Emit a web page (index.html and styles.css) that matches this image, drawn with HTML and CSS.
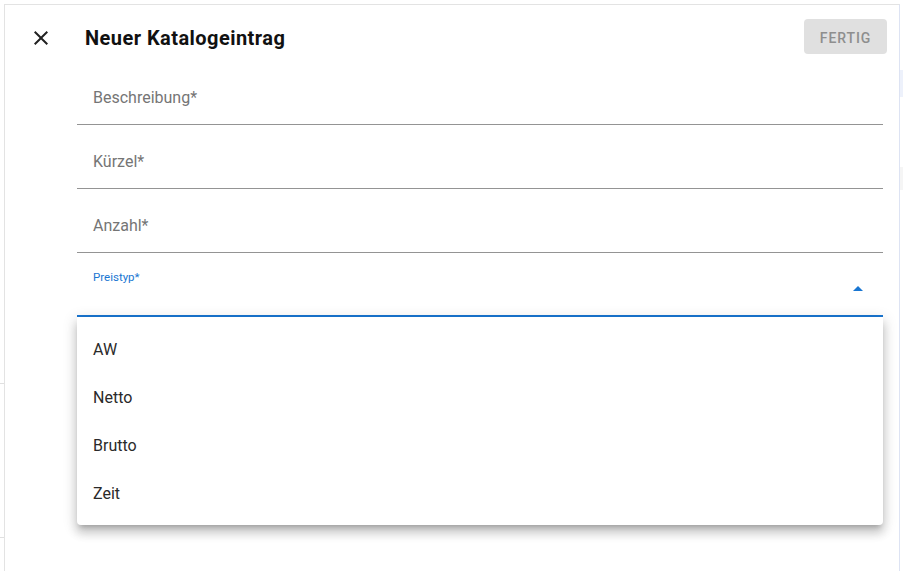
FILE: index.html
```html
<!DOCTYPE html>
<html lang="de">
<head>
<meta charset="utf-8">
<title>Neuer Katalogeintrag</title>
<link rel="stylesheet" href="styles.css">
</head>
<body>
<div class="page">
  <div class="strip-left">
    <div class="mark mark-1"></div>
    <div class="mark mark-2"></div>
  </div>
  <div class="dialog">
    <div class="header">
      <svg class="close-icon" width="24" height="24" viewBox="0 0 24 24" aria-hidden="true"><path d="M19 6.41 17.59 5 12 10.59 6.41 5 5 6.41 10.59 12 5 17.59 6.41 19 12 13.41 17.59 19 19 17.59 13.41 12z" fill="#212121"/></svg>
      <h1 class="title">Neuer Katalogeintrag</h1>
      <button class="done" disabled>FERTIG</button>
    </div>
    <div class="form">
      <div class="field"><span class="label">Beschreibung*</span></div>
      <div class="field"><span class="label">Kürzel*</span></div>
      <div class="field"><span class="label">Anzahl*</span></div>
      <div class="field field-select">
        <span class="label-small">Preistyp*</span>
        <svg class="arrow" width="24" height="24" viewBox="0 0 24 24" aria-hidden="true"><path d="M7 14l5-5 5 5z" fill="#1976d2"/></svg>
      </div>
      <ul class="menu">
        <li class="item">AW</li>
        <li class="item">Netto</li>
        <li class="item">Brutto</li>
        <li class="item">Zeit</li>
      </ul>
    </div>
  </div>
  <div class="strip-right">
    <div class="block block-blue"></div>
    <div class="block block-grey"></div>
  </div>
</div>
</body>
</html>
```
FILE: styles.css
```css
* { box-sizing: border-box; }
html, body { margin: 0; padding: 0; background: #fff; }
body { font-family: Roboto, "Liberation Sans", sans-serif; color: #212121; }

.page {
  display: flex;
  width: 903px;
  height: 571px;
  overflow: hidden;
}

.strip-left {
  width: 4px;
  flex: none;
  display: flex;
  flex-direction: column;
}
.mark { height: 1px; background: #e0e0e0; }
.mark-1 { margin-top: 383px; }
.mark-2 { margin-top: 153px; }

.dialog {
  width: 896px;
  flex: none;
  margin-top: 4px;
  border-top: 1px solid #e3e3e3;
  border-left: 1px solid #e3e3e3;
  border-right: 1px solid #dde3f3;
  background: #fff;
}

.header {
  height: 56px;
  display: flex;
  align-items: center;
  padding: 10px 12px 0 12px;
}
.close-icon { margin-left: 12px; flex: none; }
.title {
  margin: 0 0 0 32px;
  font-size: 20px;
  font-weight: 700;
  letter-spacing: 0.45px;
  color: #111;
  flex: 1;
}
.done {
  margin-bottom: 3px;
  width: 83px;
  height: 35px;
  border: none;
  border-radius: 4px;
  background: #e0e0e0;
  color: #8e8e8e;
  font-family: Roboto, "Liberation Sans", sans-serif;
  font-size: 14px;
  font-weight: 500;
  letter-spacing: 0.9px;
  padding: 2px 0 0;
}

.form {
  margin: 0 16px 0 72px;
}
.field {
  height: 64px;
  border-bottom: 1px solid #949494;
  padding: 25px 0 0 16px;
}
.label {
  display: block;
  font-size: 16px;
  line-height: 24px;
  color: #757575;
}
.field-select {
  display: flex;
  align-items: flex-start;
  padding: 0 13px 0 16px;
  border-bottom: 2px solid #1976d2;
}
.label-small {
  flex: 1;
  padding-top: 17px;
  font-size: 11.5px;
  line-height: 14px;
  color: #1976d2;
}
.arrow { margin-top: 24px; flex: none; }

.menu {
  list-style: none;
  margin: 0;
  padding: 9px 0 7px;
  height: 208px;
  background: #fff;
  border-radius: 0 0 4px 4px;
  box-shadow: 0 5px 5px -3px rgba(0,0,0,0.2), 0 8px 10px 1px rgba(0,0,0,0.14), 0 3px 14px 2px rgba(0,0,0,0.12);
}
.item {
  height: 48px;
  line-height: 48px;
  padding-left: 16px;
  font-size: 16px;
  color: #2a2a2a;
}

.strip-right {
  width: 3px;
  flex: none;
  display: flex;
  flex-direction: column;
}
.block { width: 3px; }
.block-blue { margin-top: 70px; height: 27px; background: #edf1fb; }
.block-grey { margin-top: 70px; height: 23px; background: #f5f5f5; }
```
